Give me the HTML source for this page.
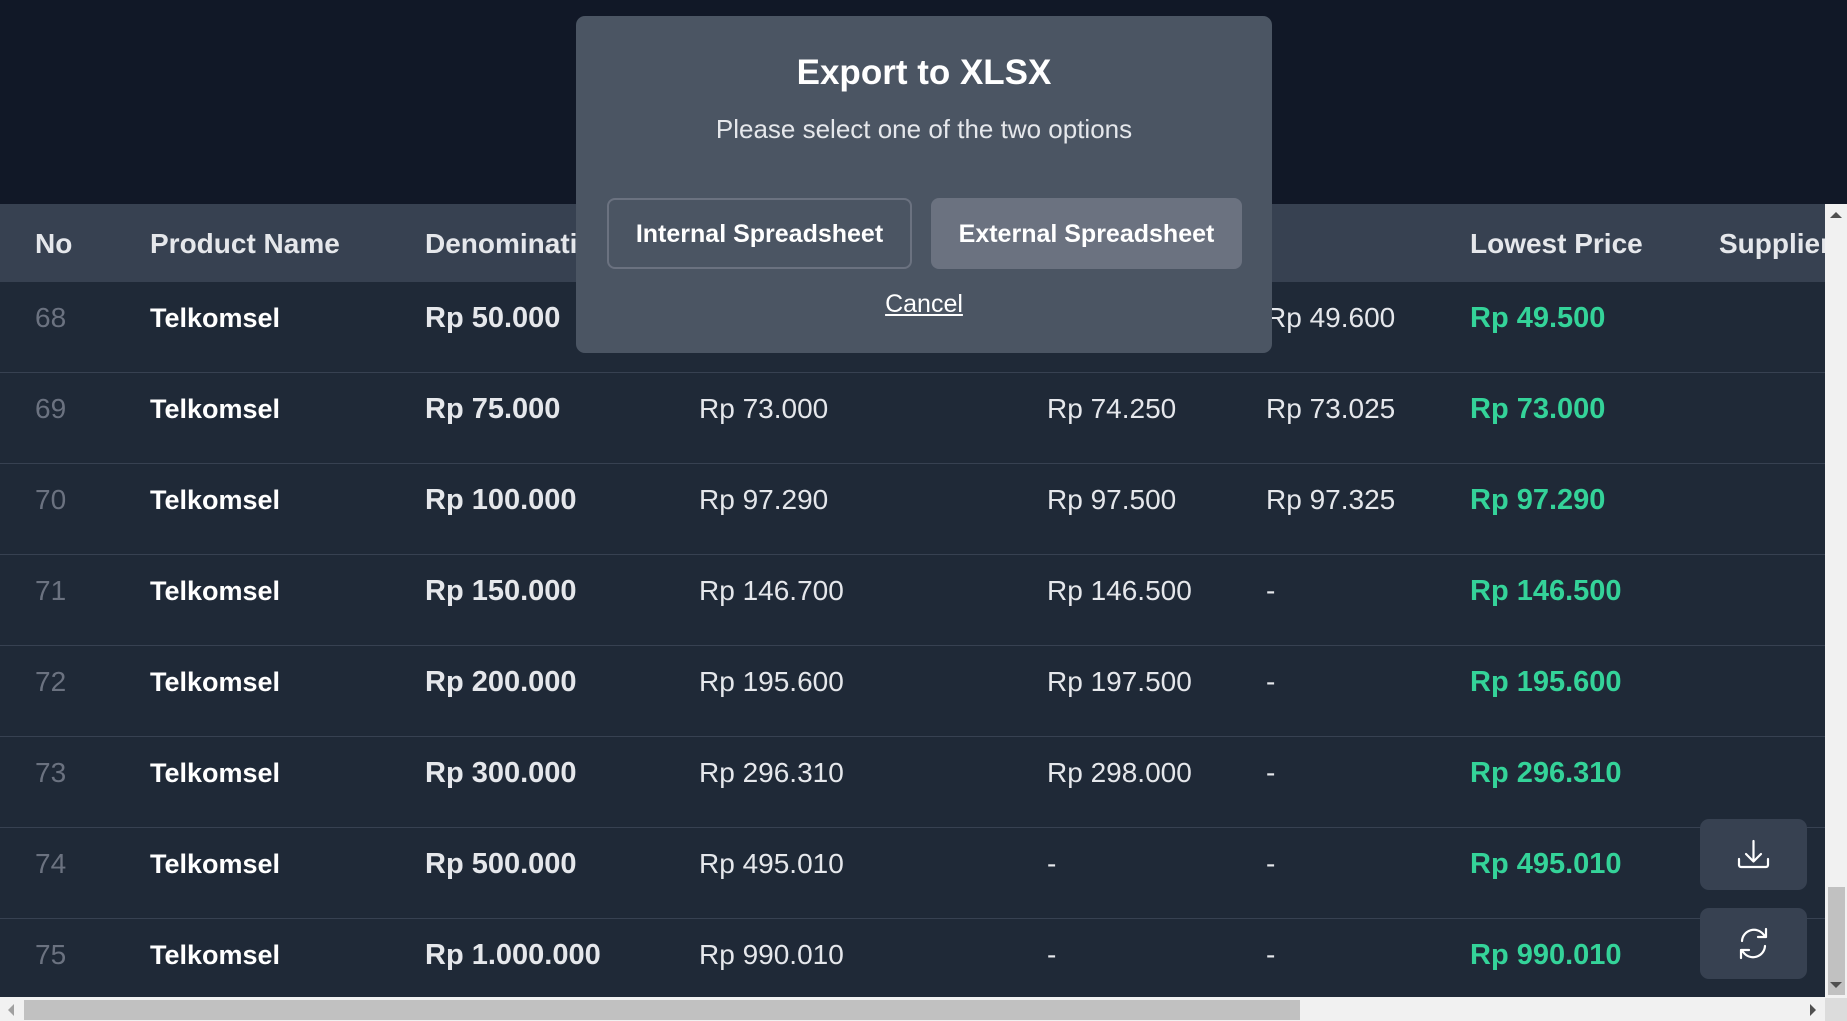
<!DOCTYPE html>
<html><head><meta charset="utf-8"><style>
*{margin:0;padding:0;box-sizing:border-box}
html,body{width:1847px;height:1021px;overflow:hidden;background:#111827;font-family:"Liberation Sans",sans-serif}
.abs{position:absolute}
#hdr{left:0;top:204px;width:1825px;height:78px;background:#374151}
.h{position:absolute;top:0;line-height:80px;font-weight:bold;font-size:28px;color:#e5e7eb;white-space:nowrap}
.row{position:absolute;left:0;width:1825px;height:91px;background:#1f2937;border-bottom:1px solid #374151}
.c{position:absolute;top:0;line-height:72px;font-size:28px;color:#e5e7eb;white-space:nowrap}
.no{left:35px;color:#6b7280}
.pn{left:150px;font-weight:bold;color:#fff;font-size:27px}
.dn{left:425px;font-weight:bold;color:#e5e7eb;font-size:29px}
.c4{left:699px}.c5{left:1047px}.c6{left:1266px}
.lp{left:1470px;font-weight:bold;color:#34d399;font-size:29px}
#modal{left:576px;top:16px;width:696px;height:337px;background:#4b5563;border-radius:9px}
.btn{position:absolute;top:182px;height:71px;border-radius:8px;color:#fff;font-weight:bold;font-size:25px;line-height:72px;text-align:center;white-space:nowrap}
.ib{position:absolute;width:107px;height:71px;background:#374151;border-radius:9px;left:1700px}
</style></head><body>
<div id="hdr" class="abs">
<div class="h" style="left:35px">No</div>
<div class="h" style="left:150px">Product Name</div>
<div class="h" style="left:425px">Denomination</div>
<div class="h" style="left:1470px">Lowest Price</div>
<div class="h" style="left:1719px">Supplier</div>
</div>
<div class="row" style="top:282px"><div class="c no">68</div><div class="c pn">Telkomsel</div><div class="c dn">Rp 50.000</div><div class="c c6">Rp 49.600</div><div class="c lp">Rp 49.500</div></div>
<div class="row" style="top:373px"><div class="c no">69</div><div class="c pn">Telkomsel</div><div class="c dn">Rp 75.000</div><div class="c c4">Rp 73.000</div><div class="c c5">Rp 74.250</div><div class="c c6">Rp 73.025</div><div class="c lp">Rp 73.000</div></div>
<div class="row" style="top:464px"><div class="c no">70</div><div class="c pn">Telkomsel</div><div class="c dn">Rp 100.000</div><div class="c c4">Rp 97.290</div><div class="c c5">Rp 97.500</div><div class="c c6">Rp 97.325</div><div class="c lp">Rp 97.290</div></div>
<div class="row" style="top:555px"><div class="c no">71</div><div class="c pn">Telkomsel</div><div class="c dn">Rp 150.000</div><div class="c c4">Rp 146.700</div><div class="c c5">Rp 146.500</div><div class="c c6">-</div><div class="c lp">Rp 146.500</div></div>
<div class="row" style="top:646px"><div class="c no">72</div><div class="c pn">Telkomsel</div><div class="c dn">Rp 200.000</div><div class="c c4">Rp 195.600</div><div class="c c5">Rp 197.500</div><div class="c c6">-</div><div class="c lp">Rp 195.600</div></div>
<div class="row" style="top:737px"><div class="c no">73</div><div class="c pn">Telkomsel</div><div class="c dn">Rp 300.000</div><div class="c c4">Rp 296.310</div><div class="c c5">Rp 298.000</div><div class="c c6">-</div><div class="c lp">Rp 296.310</div></div>
<div class="row" style="top:828px"><div class="c no">74</div><div class="c pn">Telkomsel</div><div class="c dn">Rp 500.000</div><div class="c c4">Rp 495.010</div><div class="c c5">-</div><div class="c c6">-</div><div class="c lp">Rp 495.010</div></div>
<div class="row" style="top:919px;height:79px;border:none"><div class="c no">75</div><div class="c pn">Telkomsel</div><div class="c dn">Rp 1.000.000</div><div class="c c4">Rp 990.010</div><div class="c c5">-</div><div class="c c6">-</div><div class="c lp">Rp 990.010</div></div>

<div class="ib" style="top:819px"><svg width="107" height="71" viewBox="0 0 107 71" fill="none" stroke="#fff" stroke-width="2.2" stroke-linecap="round" stroke-linejoin="round"><path d="M53.5 22v20M46 35l7.5 7.5L61 35M39 40v6a2 2 0 0 0 2 2h25a2 2 0 0 0 2-2v-6"/></svg></div>
<div class="ib" style="top:908px"><svg width="107" height="71" viewBox="0 0 107 71" fill="none" stroke="#fff" stroke-width="2.2" stroke-linecap="round" stroke-linejoin="round"><path d="M42 33a12 12 0 0 1 21.5-6.5L66 29M66 21v8h-8M65 38a12 12 0 0 1-21.5 6.5L41 42M41 50v-8h8"/></svg></div>

<div id="modal" class="abs">
<div class="abs" style="left:0;width:696px;top:36px;text-align:center;color:#fff;font-weight:bold;font-size:35px;line-height:42px">Export to XLSX</div>
<div class="abs" style="left:0;width:696px;top:97px;text-align:center;color:#e5e7eb;font-size:26px;line-height:32px">Please select one of the two options</div>
<div class="btn" style="left:31px;width:305px;border:2px solid #6b7280;line-height:68px">Internal Spreadsheet</div>
<div class="btn" style="left:355px;width:311px;background:#6b7280">External Spreadsheet</div>
<div class="abs" style="left:0;width:696px;top:272px;text-align:center;color:#fff;font-size:25px;line-height:32px;text-decoration:underline">Cancel</div>
</div>

<div class="abs" style="left:1825px;top:204px;width:22px;height:794px;background:#f1f1f1"></div>
<div class="abs" style="left:1828px;top:887px;width:17px;height:108px;background:#c1c1c1"></div>
<div class="abs" style="left:1830px;top:212px;width:0;height:0;border-left:6px solid transparent;border-right:6px solid transparent;border-bottom:6px solid #505050"></div>
<div class="abs" style="left:1830px;top:982px;width:0;height:0;border-left:6px solid transparent;border-right:6px solid transparent;border-top:6px solid #505050"></div>
<div class="abs" style="left:0;top:997px;width:1825px;height:24px;background:#f1f1f1"></div>
<div class="abs" style="left:1825px;top:998px;width:22px;height:23px;background:#dcdcdc"></div>
<div class="abs" style="left:24px;top:1000px;width:1276px;height:20px;background:#c1c1c1"></div>
<div class="abs" style="left:8px;top:1004px;width:0;height:0;border-top:6px solid transparent;border-bottom:6px solid transparent;border-right:6px solid #a0a0a0"></div>
<div class="abs" style="left:1810px;top:1004px;width:0;height:0;border-top:6px solid transparent;border-bottom:6px solid transparent;border-left:6px solid #505050"></div>
</body></html>
